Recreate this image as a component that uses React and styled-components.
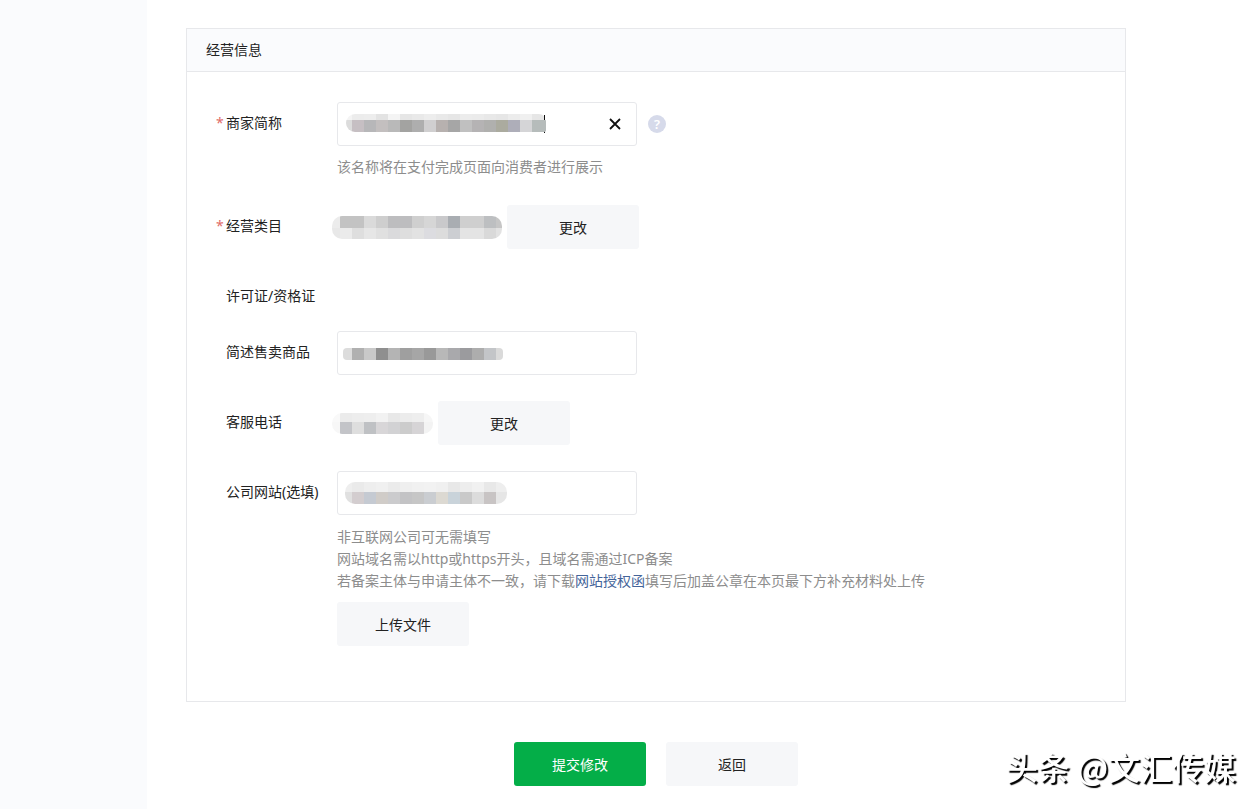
import React, { useState } from "react";
import styled, { createGlobalStyle } from "styled-components";

const GlobalStyle = createGlobalStyle`
  * {
    box-sizing: border-box;
  }

  body {
    margin: 0;
    background: #fff;
    color: #222;
    font-family: "Noto Sans", "Noto Sans CJK SC", sans-serif;
    font-size: 14px;
  }
`;

// Styled Components
const Page = styled.div`
  display: flex;
  min-height: 100vh;
`;

const Sidebar = styled.aside`
  flex: 0 0 147px;
  background: #fafbfd;
`;

const Main = styled.main`
  flex: 1;
  min-width: 0;
  padding: 28px 134px 23px 39px;
`;

const Panel = styled.section`
  border: 1px solid #e7e8eb;
`;

const PanelTitle = styled.h2`
  margin: 0;
  padding: 0 19px;
  background: #fafbfd;
  border-bottom: 1px solid #e7e8eb;
  font-size: 14px;
  font-weight: 400;
  line-height: 42px;
`;

const Form = styled.form`
  display: flex;
  flex-direction: column;
  gap: 26px;
  padding: 30px 28px 55px;
`;

const Row = styled.div`
  display: flex;
  align-items: flex-start;
`;

const Label = styled.label`
  display: flex;
  flex: 0 0 122px;
  padding-top: ${(props) => (props.$compact ? "6px" : "0")};
  margin-bottom: ${(props) => (props.$compact ? "-6px" : "0")};
  line-height: ${(props) => (props.$compact ? "30px" : "42px")};
  white-space: nowrap;
`;

const Mark = styled.span`
  flex: 0 0 11px;
  padding-left: 1px;
  color: #e06c68;
`;

const Field = styled.div`
  flex: 1;
  min-width: 0;
`;

const Line = styled.div`
  display: flex;
  align-items: center;
  gap: ${(props) => props.$gap || "0"};
`;

const InputBox = styled.div`
  position: relative;
  width: 300px;
`;

const Input = styled.input`
  display: block;
  width: 100%;
  height: 44px;
  padding: 0 40px 0 10px;
  border: 1px solid #e7e8eb;
  border-radius: 3px;
  background: #fff;
  color: transparent;
  font: inherit;
  outline: none;
`;

const InputCover = styled.div`
  position: absolute;
  top: ${(props) => props.$top};
  left: ${(props) => props.$left};
  display: flex;
  pointer-events: none;
`;

const Pixels = styled.svg`
  display: block;
  flex: none;
  border-radius: ${(props) => props.$radius || "10px"};
`;

const Caret = styled.span`
  position: absolute;
  top: 13px;
  left: 207px;
  width: 1px;
  height: 18px;
  background: #111;
`;

const ClearButton = styled.button`
  position: absolute;
  top: 12px;
  right: 12px;
  display: flex;
  align-items: center;
  justify-content: center;
  width: 20px;
  height: 20px;
  padding: 0;
  border: 0;
  background: none;
  cursor: pointer;
`;

const HelpButton = styled.button`
  width: 18px;
  height: 18px;
  padding: 0;
  border: 0;
  border-radius: 50%;
  background: #d6daea;
  color: #fff;
  font: 600 13px/18px "Noto Sans", sans-serif;
  text-align: center;
  cursor: pointer;
`;

const Value = styled.div`
  margin-left: -5px;
`;

const Button = styled.button`
  flex: none;
  width: 132px;
  height: 44px;
  padding: 0;
  border: 0;
  border-radius: 3px;
  background: ${(props) => (props.$primary ? "#04ae48" : "#f6f7f9")};
  color: ${(props) => (props.$primary ? "#fff" : "#222")};
  font: inherit;
  cursor: pointer;
`;

const Hint = styled.p`
  margin: ${(props) => (props.$spaced ? "11px 0 10px" : "10px 0 1px")};
  color: #8d8d8d;
  line-height: 22px;
`;

const HintLink = styled.a`
  color: #44649a;
  text-decoration: none;
`;

const Actions = styled.div`
  display: flex;
  justify-content: center;
  gap: 20px;
  margin-top: 40px;
`;

const Watermark = styled.div`
  position: fixed;
  right: 24px;
  bottom: 20px;
  color: #fff;
  font-family: "Noto Sans CJK SC", sans-serif;
  font-size: 32px;
  font-weight: 500;
  line-height: 46px;
  text-shadow: 2px 2px 1px #000;
  white-space: nowrap;
  pointer-events: none;
`;

// Hidden values: rows of 12px cells, the first column may be cut by `first`
const CELL = 12;

const covers = {
  shortName: {
    width: 200,
    first: 6,
    radius: "10px 8px 2px 10px",
    heights: [6, 12],
    rows: [
      "f4f4f4 ececec ededed e3e3e3 f4f4f4 e6e6e6 e9e9e9 ededed e9e9e9 e6e6e6 ececec ebebeb e8e8e8 e6e6e6 ececec f0f0f0 e6e6e6",
      "dcdcdc c6bfc3 b7b7b9 c3bfbf b9b9b9 a3a3a1 aeaeae d0cfd0 b7b1af a6a6a6 c0c0c0 b5b3b4 b0b0ae abab9f aeaeb9 d5d5d7 b6bcbb",
    ],
  },
  category: {
    width: 170,
    first: 8,
    heights: [12, 11],
    rows: [
      "ececec c3c3c3 c3c3c3 dadada cecece bdbdbf bdbdbf cfcfcf d6d6d6 c9c9cb a9adb2 cfcfcf cfcfcf bdbfc1 c6c6c6",
      "e8e8e8 ebebeb dedede e6e6e6 e0e0e0 dadadc dedede e2e2e2 dcdce0 dcdcdc ccced2 e4e4e4 e4e4e4 d9d9d9 e2e2e2",
    ],
  },
  goods: {
    width: 160,
    first: 9,
    radius: "4px",
    heights: [12],
    rows: [
      "dcdcdc b0b0b0 c9c9c9 8f8f8f b4b4b4 9f9f9f a6a6a6 999999 b8b8b8 a9a9ac 9b9b9e adadad c3c5c8 dadada",
    ],
  },
  phone: {
    width: 101,
    first: 8,
    heights: [9, 12],
    rows: [
      "f9f9f9 ebebeb ededed eeeeee f2f2f2 e8e8e8 ececec eeeeee f6f6f6",
      "f7f7f7 c3c4c8 dedede bfc1c4 d8d6d8 d2d2d4 cccccc d6d4d6 f3f3f3",
    ],
  },
  website: {
    width: 162,
    first: 7,
    heights: [10, 12],
    rows: [
      "eeeeee eaeaea eeeeee f0f0f0 ebebeb efefef f1f1f1 f2f2f2 f0f0f0 e8e8e8 ededed f1f1f1 e8e8e8 eeeeee",
      "e0e0e0 d3cdcf c5cad2 d0ccc8 cbcbcd c3c3c5 c6c6c6 cacdd1 dcd9d2 c9d3da c9c9c9 dcdcdc c8c4c4 e6e6e6",
    ],
  },
};

const Mosaic = ({ name }) => {
  const { width, first, heights, rows, radius } = covers[name];
  const height = heights.reduce((a, b) => a + b, 0);

  return (
    <Pixels
      width={width}
      height={height}
      $radius={radius}
      shapeRendering="crispEdges"
      aria-hidden="true"
    >
      {rows.map((row, r) =>
        row.split(" ").map((color, i, cells) => (
          <rect
            key={`${r}-${i}`}
            x={first + (i - 1) * CELL}
            y={r === 0 ? 0 : heights[0]}
            // the darker row runs to the very end of the cover
            width={r === 1 && i === cells.length - 1 ? CELL * 2 : CELL}
            height={heights[r]}
            fill={`#${color}`}
          />
        ))
      )}
    </Pixels>
  );
};

const App = () => {
  const [form, setForm] = useState({ shortName: "", goods: "", website: "" });

  const handleChange = (e) => {
    setForm({ ...form, [e.target.name]: e.target.value });
  };

  return (
    <>
      <GlobalStyle />
      <Page lang="zh-CN">
        <Sidebar />
        <Main>
          <Panel>
            <PanelTitle>经营信息</PanelTitle>
            <Form id="business" onSubmit={(e) => e.preventDefault()}>
              <Row>
                <Label htmlFor="shortName">
                  <Mark>*</Mark>商家简称
                </Label>
                <Field>
                  <Line $gap="11px">
                    <InputBox>
                      <Input
                        id="shortName"
                        name="shortName"
                        value={form.shortName}
                        onChange={handleChange}
                      />
                      <Caret />
                      <InputCover $top="12px" $left="9px">
                        <Mosaic name="shortName" />
                      </InputCover>
                      <ClearButton
                        type="button"
                        aria-label="清除"
                        onClick={() => setForm({ ...form, shortName: "" })}
                      >
                        <svg width="12" height="12" viewBox="0 0 12 12">
                          <path d="M1 1l10 10M11 1L1 11" stroke="#111" strokeWidth="1.8" />
                        </svg>
                      </ClearButton>
                    </InputBox>
                    <HelpButton type="button">?</HelpButton>
                  </Line>
                  <Hint>该名称将在支付完成页面向消费者进行展示</Hint>
                </Field>
              </Row>

              <Row>
                <Label as="div">
                  <Mark>*</Mark>经营类目
                </Label>
                <Field>
                  <Line $gap="5px">
                    <Value>
                      <Mosaic name="category" />
                    </Value>
                    <Button type="button">更改</Button>
                  </Line>
                </Field>
              </Row>

              <Row>
                <Label as="div" $compact>
                  <Mark />
                  许可证/资格证
                </Label>
              </Row>

              <Row>
                <Label htmlFor="goods">
                  <Mark />
                  简述售卖商品
                </Label>
                <Field>
                  <InputBox>
                    <Input id="goods" name="goods" value={form.goods} onChange={handleChange} />
                    <InputCover $top="17px" $left="6px">
                      <Mosaic name="goods" />
                    </InputCover>
                  </InputBox>
                </Field>
              </Row>

              <Row>
                <Label as="div">
                  <Mark />
                  客服电话
                </Label>
                <Field>
                  <Line $gap="5px">
                    <Value>
                      <Mosaic name="phone" />
                    </Value>
                    <Button type="button">更改</Button>
                  </Line>
                </Field>
              </Row>

              <Row>
                <Label htmlFor="website">
                  <Mark />
                  公司网站(选填)
                </Label>
                <Field>
                  <InputBox>
                    <Input
                      id="website"
                      name="website"
                      value={form.website}
                      onChange={handleChange}
                    />
                    <InputCover $top="11px" $left="8px">
                      <Mosaic name="website" />
                    </InputCover>
                  </InputBox>
                  <Hint $spaced>
                    非互联网公司可无需填写
                    <br />
                    网站域名需以http或https开头，且域名需通过ICP备案
                    <br />
                    若备案主体与申请主体不一致，请下载<HintLink href="#letter">网站授权函</HintLink>
                    填写后加盖公章在本页最下方补充材料处上传
                  </Hint>
                  <Button type="button">上传文件</Button>
                </Field>
              </Row>
            </Form>
          </Panel>

          <Actions>
            <Button type="submit" form="business" $primary>
              提交修改
            </Button>
            <Button type="button">返回</Button>
          </Actions>
        </Main>
        <Watermark>头条 @文汇传媒</Watermark>
      </Page>
    </>
  );
};

export default App;
